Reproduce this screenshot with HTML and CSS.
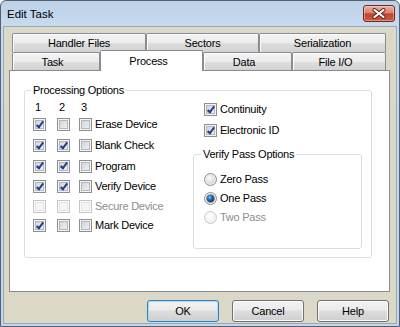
FILE: index.html
```html
<!DOCTYPE html>
<html>
<head>
<meta charset="utf-8">
<link rel="stylesheet" href="styles.css">
</head>
<body>
<div class="window">
  <div class="titlebar">
    <div class="title">Edit Task</div>
    <div class="close">
      <svg width="14" height="11" viewBox="0 0 14 11"><path d="M2.5 2 L11.5 9 M11.5 2 L2.5 9" stroke="#5a1e15" stroke-width="4" stroke-linecap="round"/><path d="M2.5 2 L11.5 9 M11.5 2 L2.5 9" stroke="#fff" stroke-width="2.2" stroke-linecap="round"/></svg>
    </div>
  </div>
  <div class="client">
    <div class="tabrow row1">
      <div class="tab">Handler Files</div>
      <div class="tab">Sectors</div>
      <div class="tab">Serialization</div>
    </div>
    <div class="tabrow row2">
      <div class="tab">Task</div>
      <div class="tab active">Process</div>
      <div class="tab">Data</div>
      <div class="tab">File I/O</div>
    </div>
    <div class="panel">
      <fieldset class="group proc">
        <legend>Processing Options</legend>
        <div class="procbody">
          <div class="matrix">
            <div class="hdr">1</div><div class="hdr">2</div><div class="hdr">3</div><div></div>

            <span class="cb on"></span><span class="cb"></span><span class="cb"></span><span class="lbl">Erase Device</span>
            <span class="cb on"></span><span class="cb on"></span><span class="cb"></span><span class="lbl">Blank Check</span>
            <span class="cb on"></span><span class="cb on"></span><span class="cb"></span><span class="lbl">Program</span>
            <span class="cb on"></span><span class="cb on"></span><span class="cb"></span><span class="lbl">Verify Device</span>
            <span class="cb off"></span><span class="cb off"></span><span class="cb off"></span><span class="lbl dis">Secure Device</span>
            <span class="cb on"></span><span class="cb"></span><span class="cb"></span><span class="lbl">Mark Device</span>
          </div>
          <div class="side">
            <div class="opt"><span class="cb on"></span><span class="lbl">Continuity</span></div>
            <div class="opt"><span class="cb on"></span><span class="lbl">Electronic ID</span></div>
            <fieldset class="group verify">
              <legend>Verify Pass Options</legend>
              <div class="rrow"><span class="rb"></span><span class="lbl">Zero Pass</span></div>
              <div class="rrow"><span class="rb on"></span><span class="lbl">One Pass</span></div>
              <div class="rrow"><span class="rb off"></span><span class="lbl dis">Two Pass</span></div>
            </fieldset>
          </div>
        </div>
      </fieldset>
    </div>
    <div class="buttons">
      <div class="btn default">OK</div>
      <div class="btn">Cancel</div>
      <div class="btn">Help</div>
    </div>
  </div>
</div>
</body>
</html>
```

FILE: styles.css
```css
* { box-sizing: border-box; }

body {
  margin: 0;
  width: 400px;
  height: 327px;
  overflow: hidden;
  font-family: "Liberation Sans", Arial, sans-serif;
  font-size: 11px;
  color: #000;
  background: #fff;
}

.window {
  width: 400px;
  height: 327px;
  border: 1px solid #55606f;
  border-radius: 6px 6px 0 0;
  padding: 0 2px 2px;
  background: linear-gradient(#bcd0e7, #c9dbee 26px, #c4d6ea);
  display: flex;
  flex-direction: column;
}

.titlebar {
  height: 25px;
  display: flex;
  align-items: center;
  padding-left: 4px;
}

.title {
  flex: 1;
  font-size: 11.5px;
}

.close {
  width: 32px;
  height: 17px;
  align-self: flex-start;
  margin-top: 4px;
  margin-right: 2px;
  border: 1px solid #6d2b22;
  border-radius: 3px;
  background: linear-gradient(#e9aea1, #d98473 45%, #c2452d 52%, #cc5a40);
  box-shadow: inset 0 0 0 1px rgba(255, 255, 255, 0.35);
  display: flex;
  align-items: center;
  justify-content: center;
}

.client {
  flex: 1;
  background: #dcd8c8;
  border: 1px solid #97a8bd;
  padding: 6px 6px 1px 5px;
  display: flex;
  flex-direction: column;
}

.tabrow {
  display: grid;
  margin: 0 4px 0 3px;
}

.row1 {
  grid-template-columns: 134px 113px 127px;
  height: 19px;
}

.row2 {
  grid-template-columns: 88px 103px 89px 94px;
  height: 18px;
}

.tab {
  border: 1px solid #898c95;
  border-bottom: none;
  border-radius: 2px 2px 0 0;
  background: linear-gradient(#f3f3f3, #ebebeb 50%, #dedede 50%, #d1d1d1);
  box-shadow: inset 1px 1px 0 #fcfcfc;
  display: flex;
  align-items: center;
  justify-content: center;
  letter-spacing: -0.2px;
  white-space: nowrap;
}

.row2 .tab {
  padding-right: 7px;
}

.tab.active {
  background: #fff;
  box-shadow: none;
  margin-top: -2px;
  height: 21px;
  align-self: start;
  position: relative;
  z-index: 1;
  padding-right: 6px;
  padding-bottom: 1px;
}

.panel {
  flex: 1;
  background: #fff;
  border: 1px solid #898c95;
  padding: 13px 17px 0 14px;
}

.group {
  margin: 0;
  border: 1px solid #d5dfe5;
  border-radius: 3px;
  min-width: 0;
}

.group legend {
  padding: 0 2px;
  margin-left: -2px;
  line-height: 13px;
  letter-spacing: -0.25px;
}

.proc {
  height: 174px;
  padding: 3px 9px 0 8px;
}

.procbody {
  display: flex;
}

.matrix {
  width: 160px;
  display: grid;
  grid-template-columns: 24px 22px 16px auto;
  grid-template-rows: 14px 21px 21px 20px 21px 19px 19px;
  align-items: center;
}

.hdr {
  padding-left: 2px;
  line-height: 13px;
}

.lbl {
  line-height: 13px;
  letter-spacing: -0.25px;
  white-space: nowrap;
}

.dis {
  color: #8d8d8d;
}

.side {
  width: 169px;
}

.opt {
  display: flex;
  align-items: center;
  gap: 3px;
  height: 19px;
  padding-left: 11px;
}

.opt + .opt {
  margin-top: 2px;
}

.verify {
  height: 101px;
  margin-top: 8px;
  padding: 9px 0 0 9px;
}

.rrow {
  display: flex;
  align-items: center;
  gap: 3px;
  height: 19px;
  padding-left: 1px;
}

/* checkbox */
.cb {
  display: block;
  position: relative;
  width: 13px;
  height: 13px;
  border: 1px solid #8e8f8f;
  background: linear-gradient(135deg, #cbced3, #f6f6f6);
  box-shadow: inset 0 0 0 1px #f4f4f4, inset 0 0 0 2px #b3b7bc;
}

.cb.on::after {
  content: "";
  position: absolute;
  box-sizing: content-box;
  left: 3.5px;
  top: 0.5px;
  width: 2px;
  height: 6px;
  border: solid #213f8f;
  border-width: 0 2px 2px 0;
  transform: rotate(38deg);
}

.cb.off {
  border-color: #c6c6c6;
  background: #f4f4f4;
  box-shadow: inset 0 0 0 1px #fbfbfb, inset 0 0 0 2px #e2e2e2;
}

/* radio */
.rb {
  display: block;
  position: relative;
  width: 13px;
  height: 13px;
  border-radius: 50%;
  border: 1px solid #8e8f8f;
  background: radial-gradient(circle at 40% 35%, #fafafa 0, #e2e2e2 45%, #c4c4c4 100%);
  box-shadow: inset 0 0 0 1px #f0f0f0;
}

.rb.on::after {
  content: "";
  position: absolute;
  left: 2px;
  top: 2px;
  width: 7px;
  height: 7px;
  border-radius: 50%;
  background: radial-gradient(circle at 40% 35%, #7cc8f0 0, #1d64a3 40%, #0a2c55 85%);
  box-shadow: 0 0 0 0.5px #1a3a5c;
}

.rb.off {
  border-color: #c9c9c9;
  background: radial-gradient(circle at 40% 35%, #fdfdfd, #ececec);
  box-shadow: none;
}

/* buttons */
.buttons {
  display: flex;
  justify-content: flex-end;
  gap: 13px;
  margin-top: 8px;
  padding-right: 1px;
  height: 22px;
}

.btn {
  width: 72px;
  height: 22px;
  border: 1px solid #707070;
  border-radius: 3px;
  background: linear-gradient(#f2f2f2, #ebebeb 45%, #dddddd 50%, #cfcfcf);
  box-shadow: inset 0 0 0 1px #fcfcfc;
  display: flex;
  align-items: center;
  justify-content: center;
  letter-spacing: -0.2px;
}

.btn.default {
  border-color: #3c7fb1;
  box-shadow: inset 0 0 0 1px #a6dcf7;
}
```
